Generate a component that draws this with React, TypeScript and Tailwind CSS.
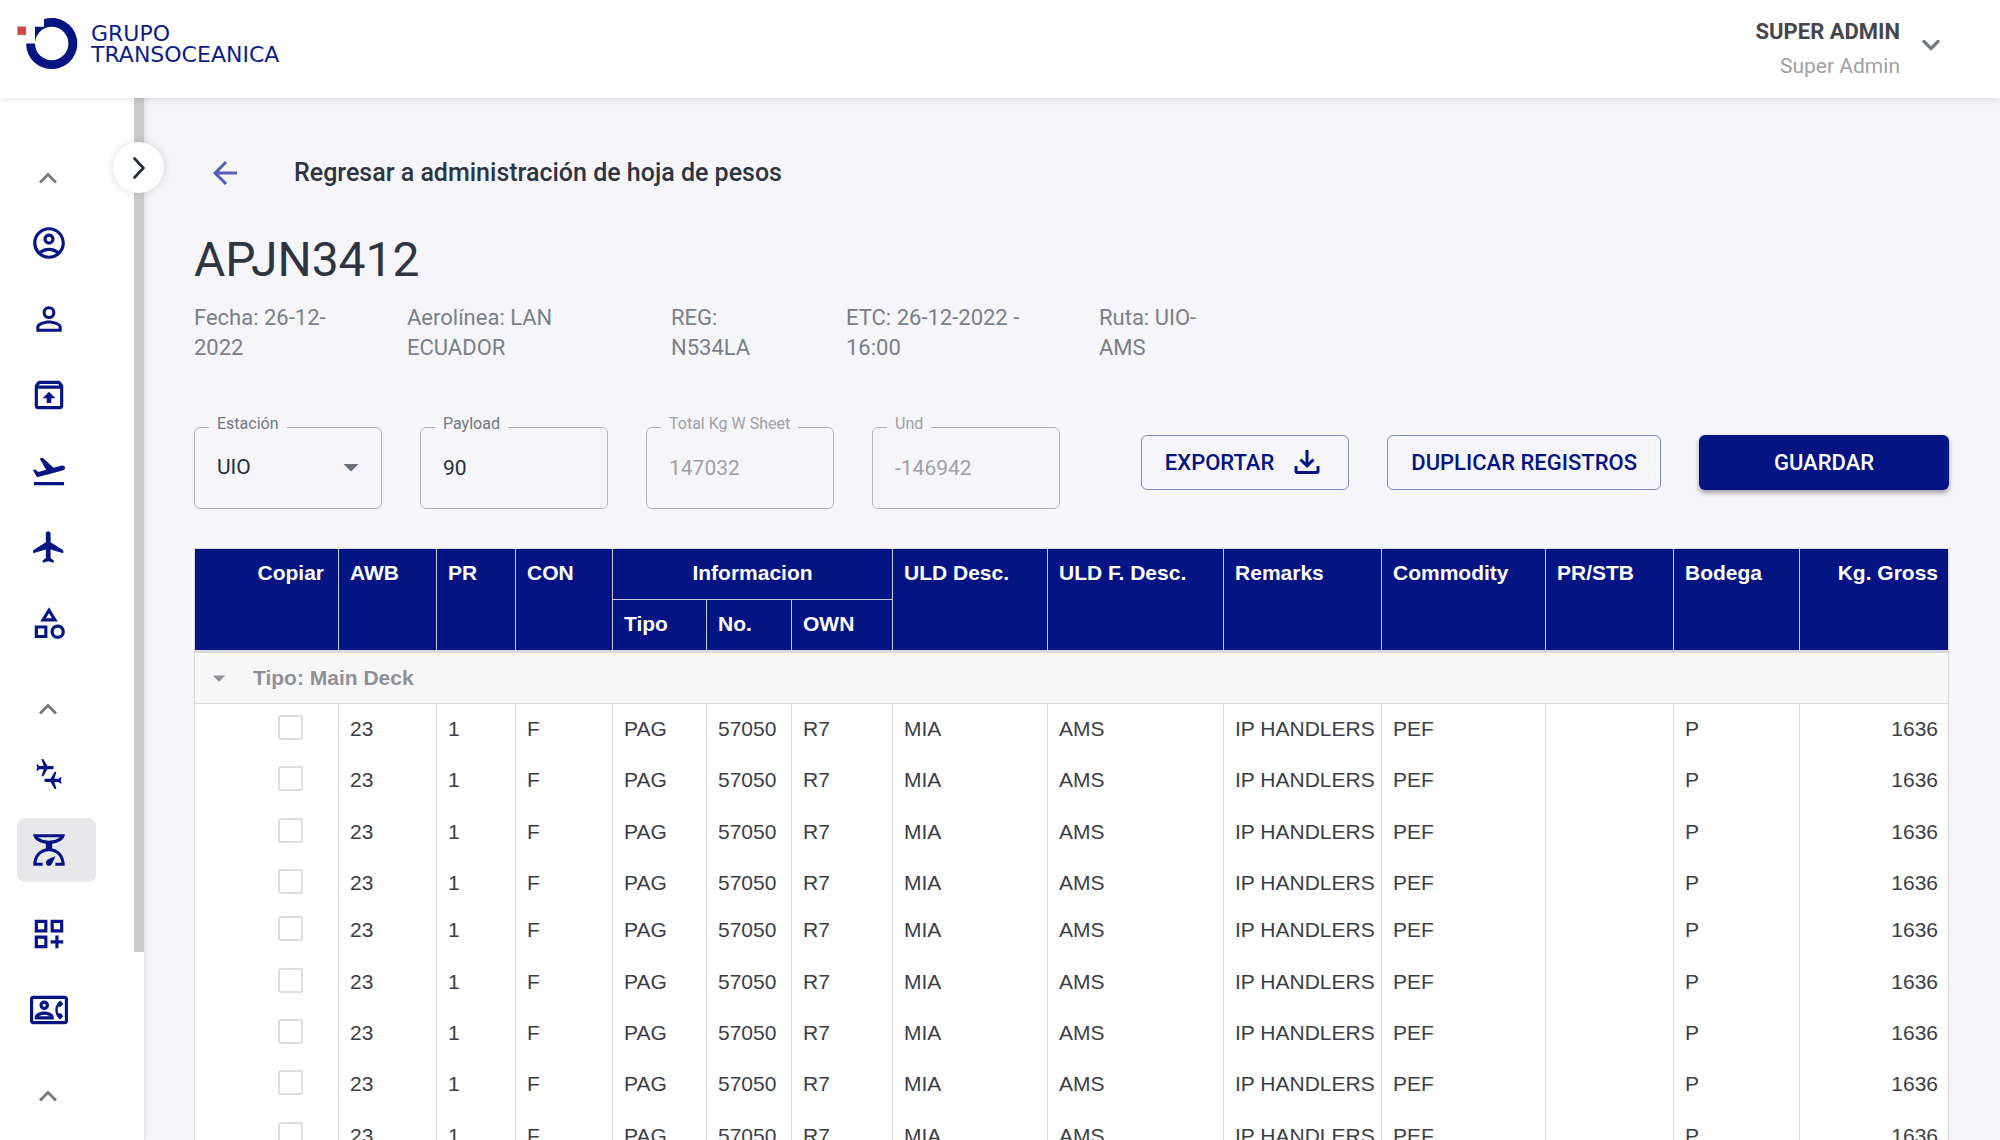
import type { ComponentType, ReactNode } from "react";
import {
  MdArrowBack,
  MdArrowDropDown,
  MdConnectingAirports,
  MdFlight,
  MdFlightTakeoff,
  MdOutlineAccountCircle,
  MdOutlineCategory,
  MdOutlineContactPhone,
  MdOutlineDashboardCustomize,
  MdOutlineScale,
  MdOutlineUnarchive,
  MdPersonOutline,
} from "react-icons/md";

type NavItem = {
  label: string;
  icon: ComponentType<{ className?: string }>;
  active?: boolean;
};

const sections: { label: string; items: NavItem[] }[] = [
  {
    label: "Administración",
    items: [
      { label: "Perfil", icon: MdOutlineAccountCircle },
      { label: "Usuarios", icon: MdPersonOutline },
      { label: "Despachos", icon: MdOutlineUnarchive },
      { label: "Salidas", icon: MdFlightTakeoff },
      { label: "Aviones", icon: MdFlight },
      { label: "Categorías", icon: MdOutlineCategory },
    ],
  },
  {
    label: "Operaciones",
    items: [
      { label: "Conexiones", icon: MdConnectingAirports },
      { label: "Hoja de pesos", icon: MdOutlineScale, active: true },
      { label: "Paneles", icon: MdOutlineDashboardCustomize },
      { label: "Contactos", icon: MdOutlineContactPhone },
    ],
  },
  { label: "Reportes", items: [] },
];

const row = {
  awb: "23",
  pr: "1",
  con: "F",
  tipo: "PAG",
  no: "57050",
  own: "R7",
  uld: "MIA",
  uldF: "AMS",
  remarks: "IP HANDLERS",
  commodity: "PEF",
  prStb: "",
  bodega: "P",
  kg: "1636",
};

const rows = Array.from({ length: 9 }, (_, i) => ({ id: i + 1, ...row }));

function rowHeight(id: number) {
  if (id === 4) return "h-[47px]";
  return id % 3 === 2 ? "h-[52px]" : "h-[51px]";
}

function Logo() {
  return (
    <a href="#" aria-label="Grupo Transoceanica" className="flex items-center gap-[13px]">
      <svg className="h-[54px] w-[62px]" viewBox="16 17 62 54" aria-hidden="true">
        <rect x="17.5" y="26.5" width="8.5" height="8.5" fill="#cf4a45" stroke="#b9a9a9" strokeWidth="0.6" />
        <path
          fill="#041482"
          fillRule="evenodd"
          d="M44 19.1A25.6 25.6 0 1 1 26.1 43.5H35V26.7H44ZM35 43.5a16.7 16.7 0 1 0 33.4 0a16.7 16.7 0 1 0-33.4 0Z"
        />
      </svg>
      <span className="font-['DejaVu_Sans',sans-serif] text-[22px] leading-[21px] text-[#0c1c86]">
        GRUPO
        <br />
        TRANSOCEANICA
      </span>
    </a>
  );
}

function Header() {
  return (
    <header className="relative z-20 flex h-[98px] shrink-0 items-center justify-between bg-white pr-[60px] pl-4 shadow-[0_1px_8px_rgba(0,0,0,0.12)]">
      <div className="pb-2.5">
        <Logo />
      </div>
      <button type="button" className="flex items-center gap-[22px] text-right">
        <span className="leading-[34px]">
          <span className="block text-[22px] font-bold text-[#44464c]">SUPER ADMIN</span>
          <span className="block text-[21px] text-[#a0a1a5]">Super Admin</span>
        </span>
        <svg className="mb-2 h-3 w-[18px]" viewBox="0 0 18 12" fill="none" stroke="#767a86" strokeWidth="3.2" strokeLinecap="round" strokeLinejoin="round" aria-hidden="true">
          <path d="M2 2.5l7 7 7-7" />
        </svg>
      </button>
    </header>
  );
}

function Sidebar() {
  return (
    <aside className="relative z-10 flex shrink-0 justify-between border-r-2 border-[#e8e8ed] bg-white shadow-[0_0_6px_rgba(0,0,0,0.06)]">
      <nav className="flex w-[134px] flex-col gap-[27px] overflow-hidden pt-[53px] pl-[17px]">
        {sections.map((section) => (
          <div key={section.label}>
            <button type="button" aria-label={section.label} className="flex h-[54px] w-[62px] items-center justify-center">
              <svg className="h-3 w-5" viewBox="0 0 20 12" fill="none" stroke="#757a84" strokeWidth="2.8" strokeLinejoin="miter" aria-hidden="true">
                <path d="M2 10.5l8-8 8 8" />
              </svg>
            </button>
            <ul className="mt-1.5">
              {section.items.map(({ label, icon: Icon, active }) => (
                <li key={label} className={active ? "mb-5" : "mb-3 last:mb-0"}>
                  <a
                    href="#"
                    aria-label={label}
                    aria-current={active ? "page" : undefined}
                    className={
                      active
                        ? "flex h-16 w-[79px] items-center rounded-lg bg-[#e8e8eb] pl-[13px] text-[#041482]"
                        : "flex h-16 w-[79px] items-center rounded-lg pl-[13px] text-[#041482]"
                    }
                  >
                    <Icon className="size-[38px]" />
                  </a>
                </li>
              ))}
            </ul>
          </div>
        ))}
      </nav>
      <div className="h-[82%] w-2.5 bg-[#c9cacc]" />
      <button
        type="button"
        aria-label="Expandir menú"
        className="absolute top-11 -right-5 flex size-[51px] items-center justify-center rounded-full bg-white shadow-[0_0_10px_rgba(0,0,0,0.14)]"
      >
        <svg className="h-[22px] w-3" viewBox="0 0 12 22" fill="none" stroke="#252c38" strokeWidth="2.6" strokeLinecap="round" strokeLinejoin="round" aria-hidden="true">
          <path d="M1.5 1.5L10.5 11L1.5 20.5" />
        </svg>
      </button>
    </aside>
  );
}

function Field({ id, label, muted, children }: { id: string; label: string; muted?: boolean; children: ReactNode }) {
  return (
    <fieldset className="relative w-[188px] rounded-md border border-[#b4b4b9] pb-3">
      <legend className="ml-3.5 px-2 pb-1.5 text-base leading-[18px]">
        <label htmlFor={id} className={muted ? "text-[#a0a0a5]" : "text-[#737781]"}>
          {label}
        </label>
      </legend>
      {children}
    </fieldset>
  );
}

const inputClass =
  "h-[57px] w-full appearance-none bg-transparent px-[22px] text-[21px] text-[#262d39] outline-none disabled:text-[#a0a0a5] disabled:opacity-100";

function Toolbar() {
  const outlined =
    "flex h-[55px] items-center rounded-md border border-[#8288c4] px-[23px] text-[22px] font-medium whitespace-nowrap text-[#041482]";
  return (
    <div className="mt-[52px] flex items-center justify-between gap-[38px]">
      <div className="flex gap-[38px]">
        <Field id="estacion" label="Estación">
          <select id="estacion" defaultValue="UIO" className={inputClass}>
            <option>UIO</option>
          </select>
          <MdArrowDropDown className="pointer-events-none absolute top-2.5 right-3 size-9 text-[#6c7079]" />
        </Field>
        <Field id="payload" label="Payload">
          <input id="payload" defaultValue="90" className={inputClass} />
        </Field>
        <Field id="total" label="Total Kg W Sheet" muted>
          <input id="total" defaultValue="147032" disabled className={inputClass} />
        </Field>
        <Field id="und" label="Und" muted>
          <input id="und" defaultValue="-146942" disabled className={inputClass} />
        </Field>
      </div>
      <div className="flex gap-[38px]">
        <button type="button" className={outlined}>
          EXPORTAR
          <svg className="mr-[5px] ml-5 size-[26px]" viewBox="0 0 26 26" fill="none" stroke="currentColor" strokeWidth="3" aria-hidden="true">
            <path d="M13 1v16M6.5 10.5l6.5 6.5 6.5-6.5M2 17v5a1.5 1.5 0 0 0 1.5 1.5h19a1.5 1.5 0 0 0 1.5-1.5V17" />
          </svg>
        </button>
        <button type="button" className={outlined}>
          DUPLICAR REGISTROS
        </button>
        <button
          type="button"
          className="h-[55px] w-[250px] rounded-md bg-[#041482] text-[22px] font-medium text-white shadow-[0_3px_5px_rgba(0,0,0,0.35)]"
        >
          GUARDAR
        </button>
      </div>
    </div>
  );
}

function Th({ children, className = "border-l", ...rest }: { children: ReactNode; className?: string; rowSpan?: number; colSpan?: number }) {
  return (
    <th {...rest} className={`border-[#c9cbdd] px-[11px] pt-2 pb-2.5 align-top leading-8 font-bold whitespace-nowrap ${className}`}>
      {children}
    </th>
  );
}

function Td({ children, className = "" }: { children?: ReactNode; className?: string }) {
  return (
    <td className={`border-l border-[#d9d9dc] px-[11px] pt-[9px] align-top leading-8 whitespace-nowrap first:border-l-0 ${className}`}>
      {children}
    </td>
  );
}

function WeightTable() {
  return (
    <div className="mt-[39px] border border-[#d9d9dc] bg-white">
      <table className="w-full table-fixed border-separate border-spacing-0 text-left font-['Liberation_Sans',sans-serif] text-[21px] text-[#3c3e46]">
        <colgroup>
          <col className="w-[143px]" />
          <col className="w-[98px]" />
          <col className="w-[79px]" />
          <col className="w-[97px]" />
          <col className="w-[94px]" />
          <col className="w-[85px]" />
          <col className="w-[101px]" />
          <col className="w-[155px]" />
          <col className="w-[176px]" />
          <col className="w-[158px]" />
          <col className="w-[164px]" />
          <col className="w-[128px]" />
          <col className="w-[126px]" />
          <col className="w-[149px]" />
        </colgroup>
        <thead className="bg-[#041482] text-white">
          <tr>
            <Th rowSpan={2} className="pr-[14px] text-right">Copiar</Th>
            <Th rowSpan={2}>AWB</Th>
            <Th rowSpan={2}>PR</Th>
            <Th rowSpan={2}>CON</Th>
            <Th colSpan={3} className="border-b border-l text-center">Informacion</Th>
            <Th rowSpan={2}>ULD Desc.</Th>
            <Th rowSpan={2}>ULD F. Desc.</Th>
            <Th rowSpan={2}>Remarks</Th>
            <Th rowSpan={2}>Commodity</Th>
            <Th rowSpan={2}>PR/STB</Th>
            <Th rowSpan={2}>Bodega</Th>
            <Th rowSpan={2} className="border-l pr-2.5 text-right">Kg. Gross</Th>
          </tr>
          <tr>
            <Th>Tipo</Th>
            <Th>No.</Th>
            <Th>OWN</Th>
          </tr>
        </thead>
        <tbody>
          <tr className="h-[54px] bg-[#f7f7f7]">
            <td colSpan={14} className="border-t-[3px] border-b border-[#dadadc] p-0">
              <button type="button" aria-expanded="true" className="flex items-center gap-[19px] pl-[9px] font-bold text-[#8f9097]">
                <MdArrowDropDown className="size-[30px]" />
                Tipo: Main Deck
              </button>
            </td>
          </tr>
          {rows.map((r) => (
            <tr key={r.id} className={rowHeight(r.id)}>
              <Td className="text-right">
                <input
                  type="checkbox"
                  aria-label={`Copiar registro ${r.id}`}
                  className="mt-0.5 mr-6 block size-[25px] appearance-none justify-self-end rounded-[3px] border-2 border-[#dededf] bg-white"
                />
              </Td>
              <Td>{r.awb}</Td>
              <Td>{r.pr}</Td>
              <Td>{r.con}</Td>
              <Td>{r.tipo}</Td>
              <Td>{r.no}</Td>
              <Td>{r.own}</Td>
              <Td>{r.uld}</Td>
              <Td>{r.uldF}</Td>
              <Td>{r.remarks}</Td>
              <Td>{r.commodity}</Td>
              <Td>{r.prStb}</Td>
              <Td>{r.bodega}</Td>
              <Td className="pr-2.5 text-right">{r.kg}</Td>
            </tr>
          ))}
        </tbody>
      </table>
    </div>
  );
}

export default function App() {
  return (
    <div className="flex h-screen flex-col overflow-hidden bg-[#f5f5fa] font-[Roboto,sans-serif]">
      <Header />
      <div className="flex min-h-0 flex-1">
        <Sidebar />
        <main className="min-w-0 flex-1 overflow-hidden pt-[51px] pr-[51px] pl-12">
          <div className="flex h-12 items-center gap-[45px] pl-[7px]">
            <button type="button" aria-label="Regresar" className="flex size-12 items-center justify-center text-[#5560b5]">
              <MdArrowBack className="size-9" />
            </button>
            <h2 className="text-[25px] font-medium text-[#2e3541]">Regresar a administración de hoja de pesos</h2>
          </div>
          <h1 className="mt-[35px] text-5xl leading-[56px] text-[#2e3541]">APJN3412</h1>
          <div className="mt-[15px] flex text-[22px] leading-[30px] text-[#7b7f88]">
            <p className="w-[213px] pr-16">Fecha: 26-12-2022</p>
            <p className="w-[264px] pr-16">Aerolínea: LAN ECUADOR</p>
            <p className="w-[175px] pr-16">REG: N534LA</p>
            <p className="w-[253px] pr-16">ETC: 26-12-2022 - 16:00</p>
            <p className="w-[190px] pr-16">Ruta: UIO-AMS</p>
          </div>
          <Toolbar />
          <WeightTable />
        </main>
      </div>
    </div>
  );
}
